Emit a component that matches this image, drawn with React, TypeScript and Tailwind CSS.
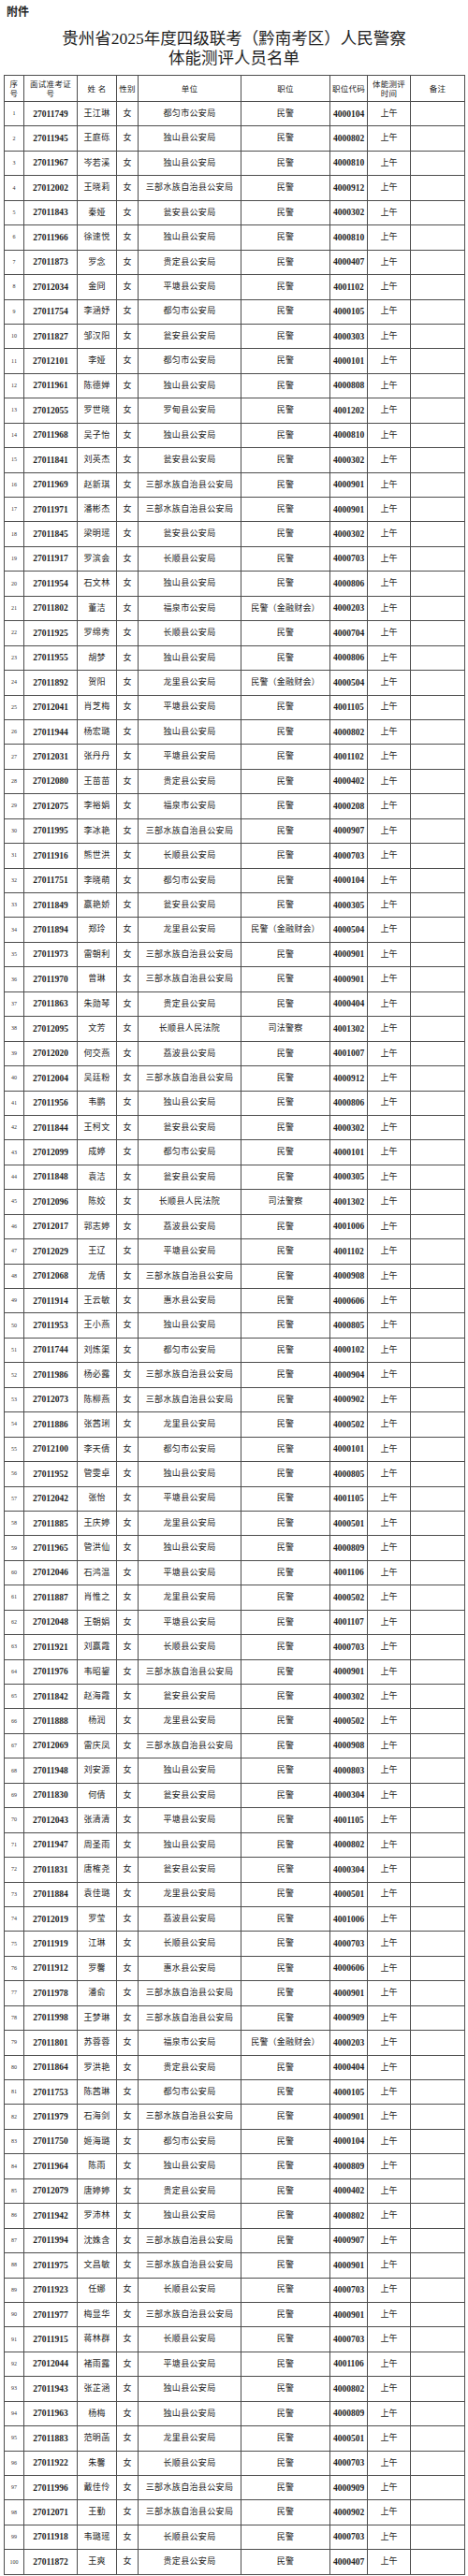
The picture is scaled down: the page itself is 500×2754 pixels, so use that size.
const serif = "font-['Liberation_Serif','Noto_Sans_CJK_SC',serif]";

// 准考证号|姓名|单位|职位|职位代码
const raw = `27011749|王江琳|都匀市公安局|民警|4000104
27011945|王庭砾|独山县公安局|民警|4000802
27011967|岑若溪|独山县公安局|民警|4000810
27012002|王晓莉|三部水族自治县公安局|民警|4000912
27011843|秦娅|瓮安县公安局|民警|4000302
27011966|徐速悦|独山县公安局|民警|4000810
27011873|罗念|贵定县公安局|民警|4000407
27012034|金冏|平塘县公安局|民警|4001102
27011754|李涵妤|都匀市公安局|民警|4000105
27011827|邹汉阳|瓮安县公安局|民警|4000303
27012101|李娅|都匀市公安局|民警|4000101
27011961|陈德婵|独山县公安局|民警|4000808
27012055|罗世晓|罗甸县公安局|民警|4001202
27011968|吴子怡|独山县公安局|民警|4000810
27011841|刘英杰|瓮安县公安局|民警|4000302
27011969|赵新琪|三部水族自治县公安局|民警|4000901
27011971|潘彬杰|三部水族自治县公安局|民警|4000901
27011845|梁明瑶|瓮安县公安局|民警|4000302
27011917|罗滨会|长顺县公安局|民警|4000703
27011954|石文林|独山县公安局|民警|4000806
27011802|董洁|福泉市公安局|民警（金融财会）|4000203
27011925|罗绵秀|长顺县公安局|民警|4000704
27011955|胡梦|独山县公安局|民警|4000806
27011892|贺阳|龙里县公安局|民警（金融财会）|4000504
27012041|肖芝梅|平塘县公安局|民警|4001105
27011944|杨宏璐|独山县公安局|民警|4000802
27012031|张丹丹|平塘县公安局|民警|4001102
27012080|王苗苗|贵定县公安局|民警|4000402
27012075|李裕娟|福泉市公安局|民警|4000208
27011995|李冰艳|三部水族自治县公安局|民警|4000907
27011916|熊世洪|长顺县公安局|民警|4000703
27011751|李晓萌|都匀市公安局|民警|4000104
27011849|嬴艳娇|瓮安县公安局|民警|4000305
27011894|郑玲|龙里县公安局|民警（金融财会）|4000504
27011973|雷朝利|三部水族自治县公安局|民警|4000901
27011970|曾琳|三部水族自治县公安局|民警|4000901
27011863|朱勋琴|贵定县公安局|民警|4000404
27012095|文芳|长顺县人民法院|司法警察|4001302
27012020|何交燕|荔波县公安局|民警|4001007
27012004|吴廷粉|三部水族自治县公安局|民警|4000912
27011956|韦鹏|独山县公安局|民警|4000806
27011844|王柯文|瓮安县公安局|民警|4000302
27012099|成婷|都匀市公安局|民警|4000101
27011848|袁洁|瓮安县公安局|民警|4000305
27012096|陈姣|长顺县人民法院|司法警察|4001302
27012017|郭志婷|荔波县公安局|民警|4001006
27012029|王辽|平塘县公安局|民警|4001102
27012068|龙倩|三部水族自治县公安局|民警|4000908
27011914|王云敏|惠水县公安局|民警|4000606
27011953|王小燕|独山县公安局|民警|4000805
27011744|刘炼渠|都匀市公安局|民警|4000102
27011986|杨必露|三部水族自治县公安局|民警|4000904
27012073|陈柳燕|三部水族自治县公安局|民警|4000902
27011886|张茜琍|龙里县公安局|民警|4000502
27012100|李天倩|都匀市公安局|民警|4000101
27011952|管雯卓|独山县公安局|民警|4000805
27012042|张怡|平塘县公安局|民警|4001105
27011885|王庆婷|龙里县公安局|民警|4000501
27011965|管洪仙|独山县公安局|民警|4000809
27012046|石鸿温|平塘县公安局|民警|4001106
27011887|肖惟之|龙里县公安局|民警|4000502
27012048|王朝娟|平塘县公安局|民警|4001107
27011921|刘赢霞|长顺县公安局|民警|4000703
27011976|韦昭鋆|三部水族自治县公安局|民警|4000901
27011842|赵海霞|瓮安县公安局|民警|4000302
27011888|杨润|龙里县公安局|民警|4000502
27012069|雷庆凤|三部水族自治县公安局|民警|4000908
27011948|刘安源|独山县公安局|民警|4000803
27011830|何倩|瓮安县公安局|民警|4000304
27012043|张清清|平塘县公安局|民警|4001105
27011947|周圣雨|独山县公安局|民警|4000802
27011831|唐榷尧|瓮安县公安局|民警|4000304
27011884|袁佳璐|龙里县公安局|民警|4000501
27012019|罗莹|荔波县公安局|民警|4001006
27011919|江琳|长顺县公安局|民警|4000703
27011912|罗馨|惠水县公安局|民警|4000606
27011978|潘俞|三部水族自治县公安局|民警|4000901
27011998|王梦琳|三部水族自治县公安局|民警|4000909
27011801|苏蓉蓉|福泉市公安局|民警（金融财会）|4000203
27011864|罗洪艳|贵定县公安局|民警|4000404
27011753|陈茜琳|都匀市公安局|民警|4000105
27011979|石海剑|三部水族自治县公安局|民警|4000901
27011750|姬海璐|都匀市公安局|民警|4000104
27011964|陈雨|独山县公安局|民警|4000809
27012079|唐婷婷|贵定县公安局|民警|4000402
27011942|罗沛林|独山县公安局|民警|4000802
27011994|沈姝含|三部水族自治县公安局|民警|4000907
27011975|文昌敏|三部水族自治县公安局|民警|4000901
27011923|任娜|长顺县公安局|民警|4000703
27011977|梅显华|三部水族自治县公安局|民警|4000901
27011915|蒋林群|长顺县公安局|民警|4000703
27012044|褚雨露|平塘县公安局|民警|4001106
27011943|张芷涵|独山县公安局|民警|4000802
27011963|杨梅|独山县公安局|民警|4000809
27011883|范明菡|龙里县公安局|民警|4000501
27011922|朱馨|长顺县公安局|民警|4000703
27011996|戴佳伶|三部水族自治县公安局|民警|4000909
27012071|王勤|三部水族自治县公安局|民警|4000902
27011918|韦璐瑶|长顺县公安局|民警|4000703
27011872|王爽|贵定县公安局|民警|4000407`;

const rows = raw.split("\n").map((line) => {
    const [id, name, unit, post, code] = line.split("|");
    return { id, name, unit, post, code };
});

const cell = "flex items-center justify-center text-center border-r border-b border-[#4d4d4d]";

const Head = ({ lines }: { lines: string[] }) => (
    <div className={`${cell} flex-col text-[8.5px] leading-[10px] tracking-[0.3px]`}>
        {lines.map((l) => (
            <span key={l}>{l}</span>
        ))}
    </div>
);

const App = () => {
    return (
        <div className={`w-[500px] min-h-[2754px] bg-white text-[#222] ${serif}`}>
            <div className="pl-[7px] pt-[6px] text-[12px] leading-[14px] font-bold">附件</div>

            <h1 className="mt-[11px] text-center text-[17.5px] leading-[21px] font-normal text-[#1e1e1e]">
                <div>贵州省2025年度四级联考（黔南考区）人民警察</div>
                <div>体能测评人员名单</div>
            </h1>

            {/* table */}
            <div className="mt-[7px] ml-[4px] grid grid-cols-[21px_57px_42px_23px_110px_95px_40px_46px_58px] grid-rows-[28px] auto-rows-[26.45px] w-fit border-l border-t border-[#4d4d4d]">
                <Head lines={["序", "号"]} />
                <Head lines={["面试准考证", "号"]} />
                <Head lines={["姓  名"]} />
                <Head lines={["性别"]} />
                <Head lines={["单位"]} />
                <Head lines={["职位"]} />
                <Head lines={["职位代码"]} />
                <Head lines={["体能测评", "时间"]} />
                <Head lines={["备注"]} />

                {rows.map((r, i) => (
                    <div key={r.id} className="contents">
                        <div className={`${cell} text-[6px] text-[#333]`}>{i + 1}</div>
                        <div className={`${cell} text-[9.5px] font-bold`}>{r.id}</div>
                        <div className={`${cell} text-[9px] tracking-[0.3px] whitespace-pre`}>{r.name}</div>
                        <div className={`${cell} text-[9px]`}>女</div>
                        <div className={`${cell} text-[9px] tracking-[0.35px]`}>{r.unit}</div>
                        <div className={`${cell} text-[9px] tracking-[0.2px]`}>{r.post}</div>
                        <div className={`${cell} text-[9.5px] font-bold`}>{r.code}</div>
                        <div className={`${cell} text-[9px]`}>上午</div>
                        <div className={cell}></div>
                    </div>
                ))}
            </div>
        </div>
    );
};

export default App;
